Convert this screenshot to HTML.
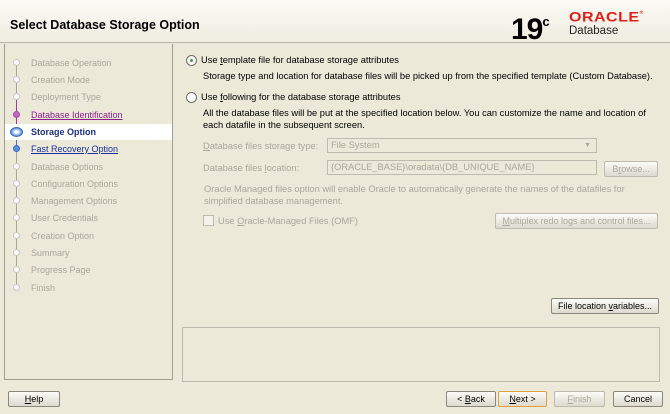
<!DOCTYPE html>
<html><head><style>
*{margin:0;padding:0;box-sizing:border-box}
body{width:670px;height:414px;background:#ece9d8;font-family:"Liberation Sans",sans-serif;font-size:9.3px;color:#000;position:relative;overflow:hidden}
.a{position:absolute;white-space:nowrap}
.hdr{left:0;top:0;width:670px;height:43px;background:linear-gradient(#fbfaf5,#efece0);border-bottom:1px solid #b9b6a8}
.left{left:4px;top:44px;width:169px;height:336px;border:1px solid #a09d92;border-top:none;background:#ece9d8}
.step{left:31px;color:#aaa79c;font-size:9px}
.dot{left:13px;width:7px;height:7px;border-radius:50%;background:#fff;border:1px solid #c8c6bc}
.btn{position:absolute;height:16px;border:1px solid #8a877c;border-radius:2px;background:linear-gradient(#fbfbf7,#dddace);text-align:center;line-height:14px;font-size:9px}
.dis{color:#aaa79c;border-color:#bdbab0}
.box{position:absolute;height:15px;border:1px solid #bdbab0;background:#ece9d8;color:#aaa79c;padding-left:3px;line-height:13px}
.g{color:#aaa79c}
.radio{position:absolute;width:11px;height:11px;border-radius:50%;border:1px solid #6f6d66;background:#fff}
</style></head><body>
<div class="a hdr"></div>
<div class="a" style="left:10px;top:18px;font-size:12.5px;font-weight:bold">Select Database Storage Option</div>
<div class="a" style="left:511px;top:7px;font-size:30px;font-weight:bold;letter-spacing:-1px;line-height:30px">19<sup style="font-size:13px;vertical-align:13px">c</sup></div>
<div class="a" style="left:569px;top:9px;font-size:16px;color:#e0201b;font-weight:bold;letter-spacing:0.5px;transform:scaleY(0.85)">ORACLE<span style="font-size:5px;vertical-align:9px">®</span></div>
<div class="a" style="left:569px;top:25px;font-size:11.5px;color:#222">Database</div>

<div class="a left"></div>
<div class="a" style="left:16px;top:63px;width:1px;height:225px;background:#a8a59a"></div>
<div class="a" style="left:16px;top:97px;width:1px;height:35px;background:#9a3a9a"></div>
<div class="a" style="left:16px;top:132px;width:1px;height:17px;background:#4a6fc0"></div>
<div class="a" style="left:5px;top:124px;width:167px;height:16px;background:#fff"></div>

<div class="a dot" style="top:59px"></div><div class="a step" style="top:58px">Database Operation</div>
<div class="a dot" style="top:76px"></div><div class="a step" style="top:75px">Creation Mode</div>
<div class="a dot" style="top:93px"></div><div class="a step" style="top:92px">Deployment Type</div>
<div class="a dot" style="top:111px;background:#c06ac0;border-color:#a050a0"></div><div class="a step" style="top:110px;color:#8a1f8a;text-decoration:underline">Database Identification</div>
<div class="a" style="left:10px;top:127px;width:13px;height:10px;border-radius:50%;background:radial-gradient(#fff 20%,#5a8ee0 70%);border:1px solid #3a6cc0"></div><div class="a step" style="top:127px;color:#1a2f80;font-weight:bold">Storage Option</div>
<div class="a dot" style="top:145px;background:#5a8ee0;border-color:#3a6cc0"></div><div class="a step" style="top:144px;color:#1a2fa0;text-decoration:underline">Fast Recovery Option</div>
<div class="a dot" style="top:163px"></div><div class="a step" style="top:162px">Database Options</div>
<div class="a dot" style="top:180px"></div><div class="a step" style="top:179px">Configuration Options</div>
<div class="a dot" style="top:197px"></div><div class="a step" style="top:196px">Management Options</div>
<div class="a dot" style="top:214px"></div><div class="a step" style="top:213px">User Credentials</div>
<div class="a dot" style="top:232px"></div><div class="a step" style="top:231px">Creation Option</div>
<div class="a dot" style="top:249px"></div><div class="a step" style="top:248px">Summary</div>
<div class="a dot" style="top:266px"></div><div class="a step" style="top:265px">Progress Page</div>
<div class="a dot" style="top:284px"></div><div class="a step" style="top:283px">Finish</div>

<div class="radio" style="left:186px;top:55px"><div style="position:absolute;left:3px;top:3px;width:3px;height:3px;border-radius:50%;background:#3aa03a"></div></div>
<div class="a" style="left:201px;top:55px">Use <u>t</u>emplate file for database storage attributes</div>
<div class="a" style="left:203px;top:71px">Storage type and location for database files will be picked up from the specified template (Custom Database).</div>
<div class="radio" style="left:186px;top:92px"></div>
<div class="a" style="left:201px;top:92px">Use <u>f</u>ollowing for the database storage attributes</div>
<div class="a" style="left:203px;top:108px">All the database files will be put at the specified location below. You can customize the name and location of</div>
<div class="a" style="left:203px;top:120px">each datafile in the subsequent screen.</div>
<div class="a g" style="left:203px;top:141px"><u>D</u>atabase files storage type:</div>
<div class="box" style="left:327px;top:138px;width:270px">File System<span style="position:absolute;right:5px;top:0;font-size:7px">▼</span></div>
<div class="a g" style="left:203px;top:163px">Database files <u>l</u>ocation:</div>
<div class="box" style="left:327px;top:160px;width:270px">{ORACLE_BASE}\oradata\{DB_UNIQUE_NAME}</div>
<div class="btn dis" style="left:604px;top:161px;width:54px">B<u>r</u>owse...</div>
<div class="a g" style="left:204px;top:184px">Oracle Managed files option will enable Oracle to automatically generate the names of the datafiles for</div>
<div class="a g" style="left:204px;top:196px">simplified database management.</div>
<div class="a" style="left:203px;top:215px;width:11px;height:11px;border:1px solid #bdbab0;background:#f4f2ea"></div>
<div class="a g" style="left:218px;top:216px">Use <u>O</u>racle-Managed Files (OMF)</div>
<div class="btn dis" style="left:495px;top:213px;width:163px"><u>M</u>ultiplex redo logs and control files...</div>
<div class="btn" style="left:551px;top:298px;width:108px">File location <u>v</u>ariables...</div>
<div class="a" style="left:182px;top:327px;width:478px;height:55px;border:1px solid #bdbab0;background:#ece9d8"></div>

<div class="btn" style="left:8px;top:391px;width:52px"><u>H</u>elp</div>
<div class="btn" style="left:446px;top:391px;width:50px">&lt; <u>B</u>ack</div>
<div class="btn" style="left:498px;top:391px;width:49px;border-color:#e0a040"><u>N</u>ext &gt;</div>
<div class="btn dis" style="left:554px;top:391px;width:51px"><u>F</u>inish</div>
<div class="btn" style="left:613px;top:391px;width:50px">Cancel</div>
</body></html>
